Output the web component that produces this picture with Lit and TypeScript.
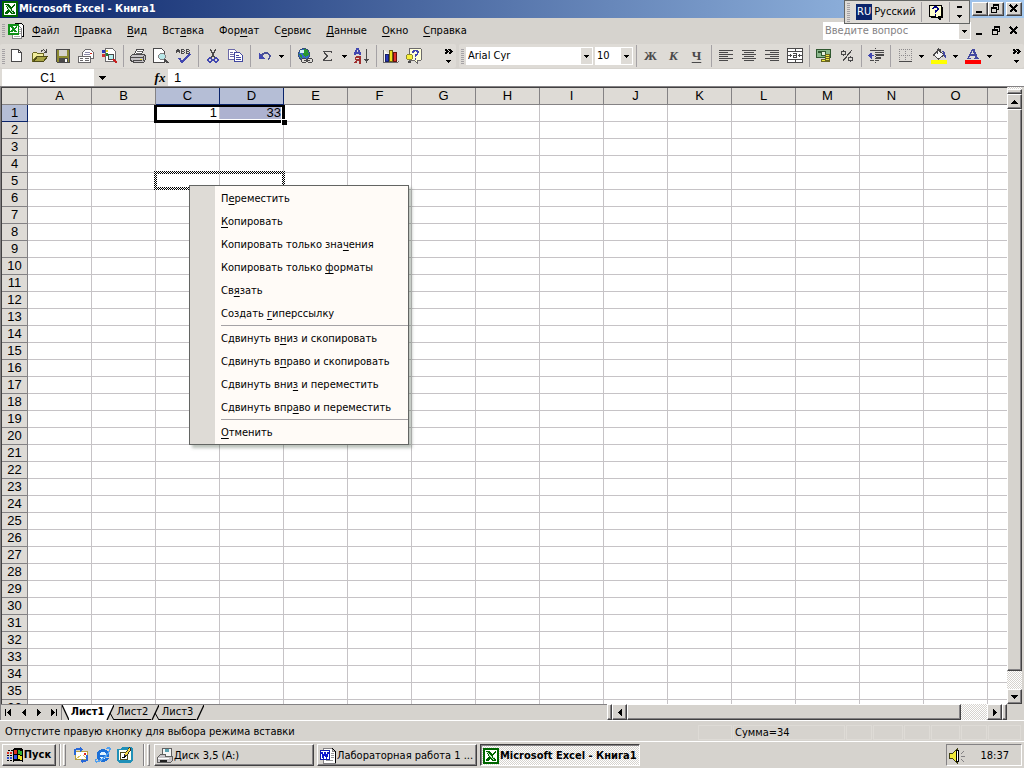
import { LitElement, html, css, svg, nothing } from "lit";
import { customElement } from "lit/decorators.js";
import { classMap } from "lit/directives/class-map.js";

const icons: Record<string, unknown> = {
  excel: svg`<path fill="#006500" d="M0 0h16v16H0z"/><path fill="#fff" d="M2 2h12v12H2z"/><path fill="#006500" d="M3 3h4l2 3 3-3h1v1l-3 4 3 4v1H9l-2-2-2 2H3v-1l3-3.500z"/><path stroke="#c8e8c8" d="M4 4l7 8M10 9h2"/>`,
  book: svg`<path fill="#fff" stroke="#000" d="M7.500 .5h6l2 2v11h-8z"/><path fill="#fff" stroke="#848284" d="M4.500 3.500h7l2 2v10h-9z"/><path stroke="#aaa" d="M11 6.500h2M11 8.500h2M11 10.500h2M6 13.500h6"/><path fill="#fff" stroke="#109018" stroke-width="1.500" d="M.75 1.750h9.500v9h-9.500z"/><path fill="#109018" d="M2 3h3l1 2 2-2h1v1L7 6l2 3H6L5 8 4 9H2l2-3z"/>`,
  blank: svg`<path fill="#fff" stroke="#4a494a" d="M2.500 1.500h7l3 3v9h-10z"/><path fill="none" stroke="#4a494a" d="M9.500 1.500v3h3"/>`,
  open: svg`<path fill="#f0ec9c" stroke="#6b6821" d="M.5 13.500v-8l1-1h3l1 1h6v3h-7z"/><path fill="#a8a444" stroke="#4f4c18" d="M1.500 13.500l4-5h10l-4 5z"/><path fill="none" stroke="#4a494a" d="M9 3.500q1-2 3-1.500l2 2M14.500 1v4M12 4.500h3"/>`,
  save: svg`<path fill="#8c8a31" stroke="#4a494a" d="M1.500 1.500h13v13h-12l-1-1z"/><path fill="#d6d3ce" d="M4 2h8v6H4z"/><path fill="#4a494a" d="M4 10h9v4H4z"/><path fill="#fff" d="M10 11h2v3h-2z"/>`,
  mail: svg`<path fill="#fff" stroke="#6b696b" d="M4.500 4.500l3-3h5l3 3v6h-11z"/><path stroke="#8c8aa8" d="M7 4.500h5M6 6.500h6"/><path fill="#d02818" d="M12 5h2v1h-2z"/><path fill="#fff" stroke="#6b696b" d="M.5 8.500h12v6H.5z"/><path stroke="#6b696b" d="M2 10.500h3M2 12.500h3M7 10.500h4M7 12.500h4"/>`,
  search: svg`<path fill="#fff" stroke="#6b696b" d="M4.500 .5h7l3 3v10h-10z"/><path fill="#2838b8" d="M1 2h3v3H1z"/><path fill="#e0d020" d="M5 2h2v2H5z"/><path fill="#d03030" d="M1 6h3v3H1z"/><path fill="#208030" d="M5 5h2v3H5z"/><circle cx="10" cy="9" r="3" fill="#b8f0f0" stroke="#4a494a"/><path stroke="#c82020" stroke-width="2" d="M12 11l3.500 4"/>`,
  print: svg`<path fill="#fff" stroke="#4a494a" d="M4.500 6.500l2-5h7l-2 5z"/><path stroke="#6b696b" d="M7 3.500h5M6 5.500h5"/><path fill="#c6c3c6" stroke="#4a494a" d="M.5 8.500l2-2h11l2 1v4l-2 3h-9l-4-2z"/><path stroke="#4a494a" d="M1 9.500h12M3 12.500h9M13.500 8v5"/><path fill="#e6d820" d="M10 11h2v1h-2z"/>`,
  preview: svg`<path fill="#fff" stroke="#4a494a" d="M.5 .5h8l3 3v11H.5z"/><circle cx="9" cy="8.500" r="3.200" fill="#b8e8e8" stroke="#848284"/><path stroke="#4a494a" stroke-width="2" d="M11.500 11l3.500 4"/>`,
  spell: svg`<path fill="none" stroke="#4a494a" d="M.5 5V2h1V1h1v1h1v3M1 3.500h2M5.500 .5v5M5 1.500h3M5 3.500h3M5 5.500h3M8.500 2v1M8.500 4v1M10.500 .5v5M10 1.500h3M10 3.500h3M10 5.500h3M13.500 2v1M13.500 4v1"/><path fill="none" stroke="#4248b0" stroke-width="1.800" d="M3 10l3 4 8-8"/>`,
  cut: svg`<path stroke="#4a494a" stroke-width="1.300" d="M5.500 1l4 9M10.500 1l-4 9"/><circle cx="5" cy="12" r="2" fill="none" stroke="#4248b0" stroke-width="1.500"/><circle cx="11" cy="12" r="2" fill="none" stroke="#4248b0" stroke-width="1.500"/>`,
  copy: svg`<path fill="#fff" stroke="#6b69a8" d="M.5 1.500h6l2 2v8h-8z"/><path stroke="#6b69a8" d="M2 4.500h3M2 6.500h4M2 8.500h4"/><path fill="#fff" stroke="#4248a0" d="M6.500 4.500h5l3 3v6h-8z"/><path stroke="#4248a0" d="M8 7.500h3M8 9.500h5M8 11.500h5"/>`,
  undo: svg`<path fill="none" stroke="#4a5098" stroke-width="1.600" d="M4 8q2-3 5-3t4 3q0 2-2 3"/><path fill="#4248b0" d="M2 5v6h6z"/>`,
  globe: svg`<circle cx="7" cy="6.500" r="5.800" fill="#3468c8" stroke="#345078"/><path fill="#289830" d="M7 1l4 1 1 5-4 2-2-3zM2 6l3 1v4z"/><path fill="#d8f0f8" d="M3 2h4v3H3z"/><path fill="#dedbd6" stroke="#4a494a" d="M5.500 10.500h3l1 1v2l-1 1h-3l-1-1v-2zM11.500 10.500h3l1 1v2l-1 1h-3l-1-1v-2z"/><path stroke="#4a494a" d="M7 12.500h6"/>`,
  sigma: svg`<path fill="none" stroke="#4a494a" stroke-width="1.300" d="M11.500 5V3.500h-8l4 4.500-4 4.500h8V11"/>`,
  sort: svg`<path fill="none" stroke="#4248b0" stroke-width="1.500" d="M1 7V5l2-4h1l2 4v2M1 5h5"/><path fill="none" stroke="#a03030" stroke-width="1.800" d="M6 15.500V9H3q-1.500 0-1.500 1.500T3 12h3M3.500 12L1 15"/><path stroke="#4a494a" stroke-width="1.300" d="M12.500 1v10"/><path fill="#4a494a" d="M10 11h5l-2.500 4z"/>`,
  chart: svg`<path fill="#f4f4ee" stroke="#6b696b" d="M.5 1.500v13h14l1-1"/><path fill="#2838b8" stroke="#182068" d="M2.500 6.500h3v7h-3z"/><path fill="#f0e020" stroke="#686010" d="M6.500 2.500h3v11h-3z"/><path fill="#e03028" stroke="#681010" d="M10.500 4.500h3v9h-3z"/>`,
  help: svg`<path fill="#ffffd8" stroke="#6b696b" d="M3.500 .5h11l1 1v10l-1 1h-3v3l-3-3h-5z"/><path fill="none" stroke="#4248b0" stroke-width="1.700" d="M7 4.500q0-2 2.500-2t2.500 2q0 2-2.500 3V9M9.500 10v2"/><circle cx="3.500" cy="9" r="3" fill="#f8f038" stroke="#8c8a31"/><path stroke="#4a494a" stroke-width="2" d="M2 13.500h3"/>`,
  left: svg`<path stroke="#4a494a" d="M1 2.500h14M1 4.500h9M1 6.500h14M1 8.500h9M1 10.500h14M1 12.500h9"/>`,
  center: svg`<path stroke="#4a494a" d="M1 2.500h14M3 4.500h10M1 6.500h14M3 8.500h10M1 10.500h14M3 12.500h10"/>`,
  right: svg`<path stroke="#4a494a" d="M1 2.500h14M6 4.500h9M1 6.500h14M6 8.500h9M1 10.500h14M6 12.500h9"/>`,
  merge: svg`<path fill="#fff" stroke="#4a494a" d="M.5 .5h15v14H.5z"/><path stroke="#4a494a" d="M1 3.500h14M1 11.500h14M8.500 1v3M8.500 12v3M1 7.500h4M11 7.500h4M3.500 6v3M12.500 6v3"/><path fill="none" stroke="#4a494a" d="M6 5.500h3.500v4h-3v-2h3"/>`,
  money: svg`<path fill="#8cb88c" stroke="#305830" d="M.5 1.500h14v8H.5z"/><path fill="#e8f0e0" stroke="#305830" d="M2 3h2v1H2zM5.500 3.500h4v4h-4z"/><path fill="#f0e840" stroke="#6b6821" d="M9.500 6.500h4v7h-4zM5.500 11.500h4v2h-4z"/><path stroke="#6b6821" d="M9 8.500h5M9 10.500h5M9 12.500h5"/>`,
  percent: svg`<circle cx="4.500" cy="5" r="2" fill="none" stroke="#4a494a" stroke-width="1.200"/><circle cx="11.500" cy="11" r="2" fill="none" stroke="#4a494a" stroke-width="1.200"/><path stroke="#4a494a" stroke-width="1.200" d="M12.500 2.500l-9 11"/>`,
  outdent: svg`<path stroke="#4a494a" d="M2 2.500h14M8 4.500h8M8 12.500h3M2 12.500h4"/><path stroke="#4a494a" stroke-width="2" d="M8 7h8M8 10h5"/><path stroke="#4a494a" stroke-dasharray="1 1" d="M7.500 0v15"/><path stroke="#4248b0" d="M1 7.500h5"/><path fill="#4248b0" d="M0 7.500l3.500-3v6z"/>`,
  borders: svg`<path stroke="#8c8a8c" stroke-dasharray="1 1" d="M2 1.500h13M2 7.500h13M2.500 1v12M8.500 1v12M14.500 1v12"/><path stroke="#4a494a" d="M2 13.500h13"/>`,
  fill: svg`<path fill="#f4f4f4" stroke="#4a494a" d="M2.500 7l5-5 5.500 5-5.500 4z"/><path fill="none" stroke="#4a494a" d="M6 6V1.500l1.500-1 1.500 1V5"/><path fill="#4248a0" d="M11 3l3 1 1 6-2-1-1-4z"/><path fill="#ff0" d="M0 12h16v4H0z"/>`,
  fontcolor: svg`<path fill="none" stroke="#4248a0" stroke-width="1.300" d="M3 10.500L7.500 1M5 7h6M1.500 10.500h4M9 10.500h5"/><path stroke="#4248a0" stroke-width="2.500" d="M8 1l4 9.500"/><path fill="#f00" d="M0 12h16v4H0z"/>`,
  outlook: svg`<path fill="#fff" stroke="#b8a040" d="M2.500 4.500h12v8h-12z"/><path fill="none" stroke="#d8c060" d="M3 12l5-4M14 12l-4-4"/><path fill="none" stroke="#2868d8" stroke-width="2" d="M2 8V4q0-2 3-2h2M14 8v4q0 2-4 2"/><path fill="#e02020" d="M11 6h2v2h-2z"/><path fill="#2868d8" d="M7 0l3 2.500L7 5zM10 11l-3 3 3 2z"/>`,
  ie: svg`<circle cx="8" cy="8.500" r="5" fill="#dff4ff" stroke="#1c70d8" stroke-width="2.800"/><path fill="#1c70d8" d="M4 7.500h9v2H4z"/><path fill="#d6d3ce" d="M10 10h6v1h-6z"/><path fill="none" stroke="#50a0f0" stroke-width="1.500" d="M1 12Q-1 17 6 13T15 2q0-2-4-.5"/>`,
  desktop: svg`<path fill="#2090b8" d="M0 2h3l2-2h9l2 2v11l-3 3H2l-2-3z"/><path fill="#fffff0" d="M2 3h12v10H2z"/><path fill="#fff" stroke="#504818" d="M3.500 5.500h7v7h-7z"/><path fill="none" stroke="#000" d="M5 10.500h2l2-2"/><path stroke="#303030" stroke-width="3" d="M8 9l5.500-8"/><path stroke="#f8d840" stroke-width="1.800" d="M8.500 8l4.500-6.500"/>`,
  drive: svg`<path fill="#f4f4f4" stroke="#606060" d="M5.500 .5h9v8h-9z"/><path fill="#58a0b0" d="M8 1h4v3H8z"/><path fill="#c6c3c6" stroke="#606060" d="M.5 9.500l3-3h5v2h7v4l-2 2H.5z"/><path stroke="#fff" d="M1 10.500h11"/><path stroke="#202020" stroke-width="2" d="M3 13h7"/>`,
  word: svg`<path fill="#fff" stroke="#848284" d="M3.500 .5h9v3h3v12h-12z"/><path fill="none" stroke="#000" d="M12.500 .5l3 3v11"/><path stroke="#999" d="M11 5.500h3M11 7.500h3M11 9.500h3M6 12.500h7"/><path fill="#fff" stroke="#1018b0" d="M.5 2.500h9v9h-9z"/><path fill="none" stroke="#1018d0" stroke-width="1.800" d="M2 4l1.300 5L5 5l1.700 4L8 4"/>`,
  flag: svg`<path fill="#000" d="M6 2q4-3 10 0v13q-5-3-10 0z"/><path fill="#e03020" d="M7 3q2-1 3 0v4q-1-1-3 0z"/><path fill="#30b030" d="M11 3l4 1v4l-4-1z"/><path fill="#3050e8" d="M7 8q2-1 3 0v4q-1-1-3 0z"/><path fill="#f0e020" d="M11 8l4 1v4l-4-1z"/><path stroke="#e03020" stroke-width="2" stroke-dasharray="2 1" d="M0 6h6"/><path stroke="#3050d8" stroke-width="2" stroke-dasharray="2 1" d="M0 11h6"/><path stroke="#000" stroke-dasharray="2 1" d="M1 3.500h5M0 8.500h6M0 13.500h6"/>`,
  sound: svg`<path fill="#f0e838" stroke="#404010" d="M.5 5.500h3l5-5v15l-5-5h-3z"/><path fill="#fff" stroke="#000" d="M7.500 2.500h2v11h-2z"/><path stroke="#848284" d="M12 8.500h4M12 6l3-3M12 11l3 3"/>`,
  langhelp: svg`<path fill="#000" d="M3 3h12v11h-2v2h-2v-2H3z"/><path fill="#ffffce" stroke="#000" d="M1.500 1.500h12v11h-3v2l-3-2h-6z"/><path fill="none" stroke="#000084" stroke-width="1.700" d="M5 5q0-2 2.500-2T10 5q0 1-2.500 2.500V9M7.500 10v2"/>`,
};

const icon = (name: string, size = 16) =>
  html`<svg class="icon" width=${size} height=${size} viewBox="0 0 16 16" shape-rendering="crispEdges" fill="none" aria-hidden="true">${icons[name]}</svg>`;

const arrow = (dir = "down") => {
  const d: Record<string, string> = {
    down: "M0 0h7v1H0zM1 1h5v1H1zM2 2h3v1H2zM3 3h1v1H3z",
    up: "M3 0h1v1H3zM2 1h3v1H2zM1 2h5v1H1zM0 3h7v1H0z",
    left: "M3 0h1v7H3zM2 1h1v5H2zM1 2h1v3H1zM0 3h1v1H0z",
    right: "M0 0h1v7H0zM1 1h1v5H1zM2 2h1v3H2zM3 3h1v1H3z",
  };
  const flat = dir === "down" || dir === "up";
  return html`<svg class="icon" width=${flat ? 7 : 4} height=${flat ? 4 : 7} shape-rendering="crispEdges" aria-hidden="true"><path d=${d[dir]} /></svg>`;
};

const smallArrow = html`<svg class="icon" width="5" height="3" shape-rendering="crispEdges" aria-hidden="true"><path d="M0 0h5v1H0zM1 1h3v1H1zM2 2h1v1H2z" /></svg>`;
const chevrons = html`<svg class="icon" width="8" height="14" shape-rendering="crispEdges" fill="none" stroke="#000" aria-hidden="true"><path d="M0 0l2.500 2.500L0 5M4 0l2.500 2.500L4 5" stroke-width="1.500" /><path fill="#000" stroke="none" d="M1 11h5v1H1zM2 12h3v1H2zM3 13h1v1H3z" /></svg>`;
const winGlyph = (kind: string) => html`<svg class="icon" width="10" height="10" shape-rendering="crispEdges" fill="none" stroke="#000" aria-hidden="true">
  ${kind === "min" ? svg`<path stroke-width="2" d="M1 8h6" />` : nothing}
  ${kind === "restore" ? svg`<path d="M2.500 3V.5h5v5H6M.5 3.500h5v5h-5z" /><path d="M2 1h6M0 4h6" stroke-width="2" />` : nothing}
  ${kind === "close" ? svg`<path stroke-width="1.700" d="M1 1l7 7M8 1l-7 7" />` : nothing}
</svg>`;

/* An underscore marks the letter that serves as the access key. */
const keyed = (label: string) => {
  const i = label.indexOf("_");
  return i < 0 ? label : html`${label.slice(0, i)}<u>${label[i + 1]}</u>${label.slice(i + 2)}`;
};

const base = css`
  * { box-sizing: border-box; }
  button, input, select { font: inherit; color: inherit; margin: 0; padding: 0; border: 0; border-radius: 0; background: none; outline: 0; min-width: 0; }
  button { display: flex; align-items: center; justify-content: center; white-space: nowrap; }
  .icon { display: block; flex: none; }
  u { text-underline-offset: 2px; text-decoration-thickness: 1px; text-decoration-skip-ink: none; }
  .raised { background: #d6d3ce; border: 1px solid; border-color: #fff #424142 #424142 #fff; box-shadow: inset -1px -1px #848284; }
`;

@customElement("xl-menubar")
class MenuBar extends LitElement {
  static styles = [base, css`
    :host { display: flex; height: 26px; align-items: center; padding: 0 2px; }
    .grip { width: 3px; height: 14px; background: repeating-linear-gradient(#a5a2a5 0 1px, transparent 1px 2px); }
    .doc { width: 20px; padding-left: 3px; }
    .menus { display: flex; flex: 1; gap: 1px; }
    .menu { padding: 0 7px; height: 20px; }
    .ask { display: flex; width: 148px; height: 18px; background: #fff; border: 1px solid #fff; color: #848284; }
    .ask input { flex: 1; padding: 0 1px; }
    .ask input::placeholder { color: #848284; opacity: 1; }
    .ask button { width: 11px; background: #dedbd6; }
    .win { width: 18px; height: 20px; }
    .wins { display: flex; width: 51px; justify-content: space-between; }
  `];
  render() {
    const menus = ["_Файл", "_Правка", "_Вид", "Вст_авка", "Фор_мат", "С_ервис", "_Данные", "_Окно", "_Справка"];
    return html`<span class="grip"></span><span class="doc">${icon("book")}</span>
      <nav class="menus">${menus.map((m) => html`<button class="menu"><span>${keyed(m)}</span></button>`)}</nav>
      <div class="ask"><input aria-label="Вопрос" placeholder="Введите вопрос" /><button aria-label="Список вопросов">${smallArrow}</button></div>
      <div class="wins">${["min", "restore", "close"].map((k) => html`<button class="win" aria-label=${k}>${winGlyph(k)}</button>`)}</div>`;
  }
}

@customElement("xl-toolbars")
class Toolbars extends LitElement {
  static styles = [base, css`
    :host { display: flex; height: 25px; gap: 3px; padding-bottom: 1px; }
    .bar { display: flex; align-items: center; background: #dedbd6; border-radius: 2px; padding-left: 2px; }
    .std { width: 456px; }
    .fmt { flex: 1; }
    .grip { width: 3px; height: 15px; background: repeating-linear-gradient(#a5a2a5 0 1px, transparent 1px 2px); }
    .tool { width: 23px; height: 22px; }
    .drop { width: 11px; height: 22px; }
    .sep { width: 6px; height: 22px; display: flex; justify-content: center; }
    .sep::before { content: ""; width: 1px; background: #a5a2a5; }
    .more { margin-left: auto; width: 14px; height: 22px; }
    .letter { font: bold 13px "Liberation Serif", serif; color: #4a494a; }
    .italic { font-style: italic; }
    .under { text-decoration: underline; text-underline-offset: 2px; }
    .combo { position: relative; display: flex; height: 18px; border: 1px solid #fff; background: #fff; margin-left: 2px; }
    .combo select { flex: 1; width: 100%; appearance: none; padding-left: 1px; }
    .combo .mark { position: absolute; right: 0; top: 0; bottom: 0; width: 11px; display: grid; place-items: center; background: #dedbd6; pointer-events: none; }
    .family { width: 127px; }
    .size { width: 38px; }
  `];
  private tools(spec: string) {
    return spec.split(" ").map((t) =>
      t === "|" ? html`<span class="sep"></span>` :
      t === "v" ? html`<button class="drop" aria-label="Список">${smallArrow}</button>` :
      html`<button class="tool" aria-label=${t}>${icon(t)}</button>`);
  }
  render() {
    return html`
      <div class="bar std"><span class="grip"></span>
        ${this.tools("blank open save mail search | print preview spell | cut copy | undo v | globe sigma v sort | chart help")}
        <button class="more" aria-label="Параметры панели">${chevrons}</button>
      </div>
      <div class="bar fmt"><span class="grip"></span>
        <div class="combo family"><select aria-label="Шрифт"><option>Arial Cyr</option></select><span class="mark">${smallArrow}</span></div>
        <div class="combo size"><select aria-label="Размер"><option>10</option></select><span class="mark">${smallArrow}</span></div>
        <span class="sep"></span>
        <button class="tool letter">Ж</button><button class="tool letter italic">К</button><button class="tool letter"><span class="under">Ч</span></button>
        ${this.tools("| left center right merge | money percent | outdent | borders v fill v fontcolor v")}
        <button class="more" aria-label="Параметры панели">${chevrons}</button>
      </div>`;
  }
}

@customElement("xl-context-menu")
class ContextMenu extends LitElement {
  static styles = [base, css`
    :host { display: block; width: 220px; border: 1px solid #636563; padding: 1px 0 0 1px; box-shadow: 3px 3px 3px rgba(60, 80, 60, 0.35);
      background: linear-gradient(90deg, #dedbd6 25px, #fffbf7 25px); font-size: 11px; }
    .item { width: 100%; height: 23px; padding-left: 30px; justify-content: flex-start; }
    .rule { height: 2px; margin-left: 30px; border-top: 1px solid #a5a2a5; }
  `];
  render() {
    const groups = [
      ["П_ереместить", "_Копировать", "Копировать только зна_чения", "Копировать только _форматы", "Св_язать", "Создать _гиперссылку"],
      ["Сдвинуть в_низ и скопировать", "Сдвинуть в_право и скопировать", "Сдвинуть вни_з и переместить", "Сдвинуть впр_аво и переместить"],
      ["_Отменить"],
    ];
    return groups.map((g, i) => html`${i ? html`<div class="rule"></div>` : nothing}
      ${g.map((l) => html`<button class="item" role="menuitem"><span>${keyed(l)}</span></button>`)}`);
  }
}

@customElement("xl-sheet")
class Sheet extends LitElement {
  static styles = [base, css`
    :host { display: flex; flex: 1; min-height: 0; padding-right: 2px; border: solid #848284; border-width: 1px 0 0 1px; background: #d6d3ce; }
    .grid { position: relative; flex: 1; min-width: 0; overflow: hidden; background: #fff; border: solid #424142; border-width: 1px 0 0 1px; }
    table { border-collapse: separate; border-spacing: 0; table-layout: fixed; width: 1050px; font: 13px/16px "Liberation Sans", sans-serif; }
    .stub { width: 26px; }
    th, td { height: 17px; padding: 0; border: solid #c6c3c6; border-width: 0 1px 1px 0; font-weight: normal; white-space: nowrap; }
    th { background: #dedbd6; border-color: #848284; }
    th.on { background: #b5bed6; border-color: #0a246a; }
    td { text-align: right; padding-right: 2px; }
    td.picked { background: #adb2d0; }
    .selection { position: absolute; left: 152px; top: 17px; width: 131px; height: 18px; border: 3px solid #000; border-top-width: 2px; box-shadow: inset -1px -1px #fff; }
    .handle { position: absolute; right: -5px; bottom: -5px; width: 6px; height: 6px; background: #000; border: solid #fff; border-width: 1px 0 0 1px; }
    .target { position: absolute; left: 152px; top: 83px; }
    .popup { position: absolute; left: 187px; top: 97px; }
    .scroll { display: flex; flex-direction: column; width: 15px; padding-top: 2px; background: conic-gradient(#fff 25%, #d6d3ce 0 50%, #fff 0 75%, #d6d3ce 0) 0 0 / 2px 2px; }
    .split { height: 5px; }
    .step { height: 15px; }
    .thumb { flex: 1; margin-bottom: 18px; }
  `];
  render() {
    const cols = [..."ABCDEFGHIJKLMNO", ""];
    const rows = Array.from({ length: 36 }, (_, i) => i + 1);
    const values: Record<string, string> = { C1: "1", D1: "33" };
    return html`
      <div class="grid">
        <table>
          <colgroup><col class="stub" />${cols.map(() => html`<col />`)}</colgroup>
          <thead><tr><th></th>${cols.map((c) => html`<th class=${classMap({ on: c === "C" || c === "D" })} scope="col">${c}</th>`)}</tr></thead>
          <tbody>${rows.map((r) => html`<tr><th class=${classMap({ on: r === 1 })} scope="row">${r}</th>${cols.map((c) =>
            html`<td class=${classMap({ picked: c + r === "D1" })}>${values[c + r] ?? nothing}</td>`)}</tr>`)}</tbody>
        </table>
        <div class="selection"><span class="handle"></span></div>
        <svg class="target" width="131" height="19" shape-rendering="crispEdges" aria-hidden="true">
          <defs><pattern id="dots" width="2" height="2" patternUnits="userSpaceOnUse"><path d="M0 0h2v2H0z" fill="#fff" /><path d="M0 0h1v1H0zM1 1h1v1H1z" /></pattern></defs>
          <path fill="url(#dots)" fill-rule="evenodd" d="M0 0h131v19H0zM3 3v13h125V3z" />
        </svg>
        <xl-context-menu class="popup" role="menu"></xl-context-menu>
      </div>
      <div class="scroll">
        <div class="split raised"></div>
        <button class="step raised" aria-label="Вверх">${arrow("up")}</button>
        <div class="thumb raised"></div>
        <button class="step raised" aria-label="Вниз">${arrow("down")}</button>
      </div>`;
  }
}

@customElement("xl-tabs")
class Tabs extends LitElement {
  static styles = [base, css`
    :host { display: flex; height: 16px; padding-right: 17px; border-left: 1px solid #848284; }
    .strip { display: flex; width: 606px; border-top: 1px solid #848284; }
    .nav { display: flex; width: 61px; border-right: 1px solid #848284; }
    .nav button { flex: 1; }
    .tab { width: 37px; border-bottom: 1px solid #000; }
    .slant { display: block; flex: none; }
    .active { background: #fff; font-weight: bold; border-color: #fff; }
    .scroll { flex: 1; display: flex; background: conic-gradient(#fff 25%, #d6d3ce 0 50%, #fff 0 75%, #d6d3ce 0) 0 0 / 2px 2px; }
    .split { width: 5px; }
    .step { width: 15px; }
    .thumb { flex: 1; margin-right: 26px; }
  `];
  private slant(kind: "first" | "after" | "plain" | "last") {
    const w = kind === "first" ? 7 : 8;
    return html`<svg class="slant" width=${w} height="15" fill="none" stroke="#000" aria-hidden="true">
      ${kind === "first" ? svg`<path fill="#fff" stroke="none" d="M0 0h7v15z" /><path d="M0 0l7 15" stroke-width="1.300" />` : nothing}
      ${kind === "after" ? svg`<path fill="#fff" stroke="none" d="M0 0h8L1 15H0z" />` : nothing}
      ${kind !== "first" ? svg`<path d="M8 0L1 15" stroke-width="1.300" />` : nothing}
      ${kind === "after" || kind === "plain" ? svg`<path d="M4 8l4 7" />` : nothing}
    </svg>`;
  }
  render() {
    const end = (d: string) => html`<svg class="icon" width="7" height="7" shape-rendering="crispEdges" aria-hidden="true"><path d=${d} /></svg>`;
    return html`
      <div class="strip">
        <div class="nav">
          <button aria-label="Первый лист">${end("M0 0h1v7H0zM6 0v7h-1v-1h-1v-1h-1v-1h-1v-1h1v-1h1v-1h1v-1z")}</button>
          <button aria-label="Предыдущий лист">${arrow("left")}</button>
          <button aria-label="Следующий лист">${arrow("right")}</button>
          <button aria-label="Последний лист">${end("M6 0h1v7h-1zM1 0v7h1v-1h1v-1h1v-1h1v-1h-1v-1h-1v-1h-1v-1z")}</button>
        </div>
        ${this.slant("first")}<button class="tab active">Лист1</button>${this.slant("after")}
        <button class="tab">Лист2</button>${this.slant("plain")}
        <button class="tab">Лист3</button>${this.slant("last")}
      </div>
      <div class="scroll">
        <div class="split raised"></div>
        <button class="step raised" aria-label="Влево">${arrow("left")}</button>
        <div class="thumb raised"></div>
        <button class="step raised" aria-label="Вправо">${arrow("right")}</button>
        <div class="split raised"></div>
      </div>`;
  }
}

@customElement("win-taskbar")
class Taskbar extends LitElement {
  static styles = [base, css`
    :host { display: flex; height: 27px; padding: 2px; border-top: 1px solid #fff; background: #d6d3ce; }
    .start { width: 54px; font-weight: bold; gap: 1px; }
    .rail { width: 3px; border: 1px solid; border-color: #fff #848284 #848284 #fff; }
    .line { width: 2px; border-left: 1px solid #848284; border-right: 1px solid #fff; }
    .quick { display: flex; align-items: center; width: 74px; padding: 0 7px; gap: 6px; }
    .rails { display: flex; gap: 2px; padding-left: 3px; }
    .tasks { flex: 1; display: flex; gap: 3px; padding-left: 4px; }
    .task { width: 160px; justify-content: flex-start; padding: 1px 0 0 2px; gap: 1px; }
    .task span { overflow: hidden; text-overflow: ellipsis; }
    .current { font-weight: bold; border: 1px solid; border-color: #424142 #fff #fff #424142; box-shadow: inset 1px 1px #848284;
      background: conic-gradient(#fff 25%, #d6d3ce 0 50%, #fff 0 75%, #d6d3ce 0) 0 0 / 2px 2px; }
    .tray { display: flex; align-items: center; justify-content: space-between; width: 76px; padding: 1px 12px 0 2px; border: 1px solid; border-color: #848284 #fff #fff #848284; }
  `];
  render() {
    return html`
      <button class="start raised">${icon("flag")}Пуск</button>
      <div class="rails"><span class="line"></span><span class="rail"></span></div>
      <div class="quick">${["outlook", "ie", "desktop"].map((n) => html`<button aria-label=${n}>${icon(n)}</button>`)}</div>
      <div class="rails"><span class="line"></span><span class="rail"></span></div>
      <div class="tasks">
        <button class="task raised">${icon("drive")}<span>Диск 3,5 (A:)</span></button>
        <button class="task raised">${icon("word")}<span>Лабораторная работа 1 ...</span></button>
        <button class="task current">${icon("excel")}<span>Microsoft Excel - Книга1</span></button>
      </div>
      <div class="tray">${icon("sound")}<span>18:37</span></div>`;
  }
}

@customElement("app-root")
class AppRoot extends LitElement {
  static styles = [base, css`
    :host { position: relative; display: flex; flex-direction: column; height: 100vh; overflow: hidden; background: #d6d3ce; color: #000;
      font: 11px/14px "DejaVu Sans Condensed", "DejaVu Sans", sans-serif; cursor: default; }
    .title { display: flex; align-items: center; height: 18px; padding: 0 2px; gap: 1px; color: #fff; font-weight: bold; background: linear-gradient(90deg, #0a246a, #a6caf0); }
    .title h1 { flex: 1; margin: 0; font: inherit; }
    .ctls { display: flex; }
    .ctl { width: 16px; height: 14px; color: #000; }
    .ctl.close { margin-left: 2px; }
    .lang { position: absolute; right: 54px; top: 0; width: 126px; height: 24px; display: flex; align-items: center; background: #dedbd6; border: 1px solid #636563; padding-left: 2px; }
    .lang .grip { width: 3px; height: 19px; margin-right: 6px; background: repeating-linear-gradient(#a5a2a5 0 1px, transparent 1px 2px); }
    .code { background: #0a246a; color: #fff; padding: 1px 1px; margin-right: 2px; }
    .lang .name { flex: 1; }
    .lang .bar { width: 1px; height: 20px; background: #a5a2a5; }
    .lang .ask { width: 27px; height: 20px; }
    .lang .opts { width: 19px; height: 20px; flex-direction: column; gap: 7px; }
    .dash { width: 5px; height: 2px; background: #000; }
    .formula { display: flex; height: 17px; background: #fff; font-family: "Liberation Sans", sans-serif; }
    .name-box { display: flex; width: 168px; background: #dedbd6; padding-left: 2px; }
    .name-box input { width: 92px; background: #fff; text-align: center; font-size: 12px; }
    .name-box .pull { width: 17px; }
    .name-box .fx { margin-left: auto; width: 16px; font: italic bold 13px "Liberation Serif", serif; }
    .formula .value { flex: 1; padding: 0 6px; font-size: 13px; }
    .status { display: flex; align-items: center; height: 21px; padding: 2px 3px 0 5px; border-top: 1px solid #fff; gap: 1px; }
    .status .hint { flex: 1; }
    .pane { height: 15px; border: 1px solid #dedbd6; padding-left: 1px; line-height: 13px; }
  `];
  render() {
    return html`
      <header class="title">${icon("excel")}<h1>Microsoft Excel - Книга1</h1>
        <div class="ctls">
          <button class="ctl raised" aria-label="Свернуть">${winGlyph("min")}</button>
          <button class="ctl raised" aria-label="Восстановить">${winGlyph("restore")}</button>
          <button class="ctl close raised" aria-label="Закрыть">${winGlyph("close")}</button>
        </div>
      </header>
      <xl-menubar></xl-menubar>
      <xl-toolbars></xl-toolbars>
      <div class="formula">
        <div class="name-box"><input aria-label="Имя ячейки" value="C1" /><button class="pull" aria-label="Имена">${arrow()}</button><button class="fx">fx</button></div>
        <input class="value" aria-label="Строка формул" value="1" />
      </div>
      <xl-sheet></xl-sheet>
      <xl-tabs></xl-tabs>
      <footer class="status"><span class="hint">Отпустите правую кнопку для выбора режима вставки</span>
        ${[34, 112, 26, 30, 26, 29, 26, 33].map((w, i) => html`<span class="pane" style="width:${w}px">${i === 1 ? "Сумма=34" : nothing}</span>`)}
      </footer>
      <win-taskbar></win-taskbar>
      <div class="lang"><span class="grip"></span><span class="code">RU</span><span class="name">Русский</span><span class="bar"></span>
        <button class="ask" aria-label="Справка">${icon("langhelp")}</button><span class="bar"></span>
        <button class="opts" aria-label="Параметры"><span class="dash"></span>${smallArrow}</button></div>`;
  }
}
